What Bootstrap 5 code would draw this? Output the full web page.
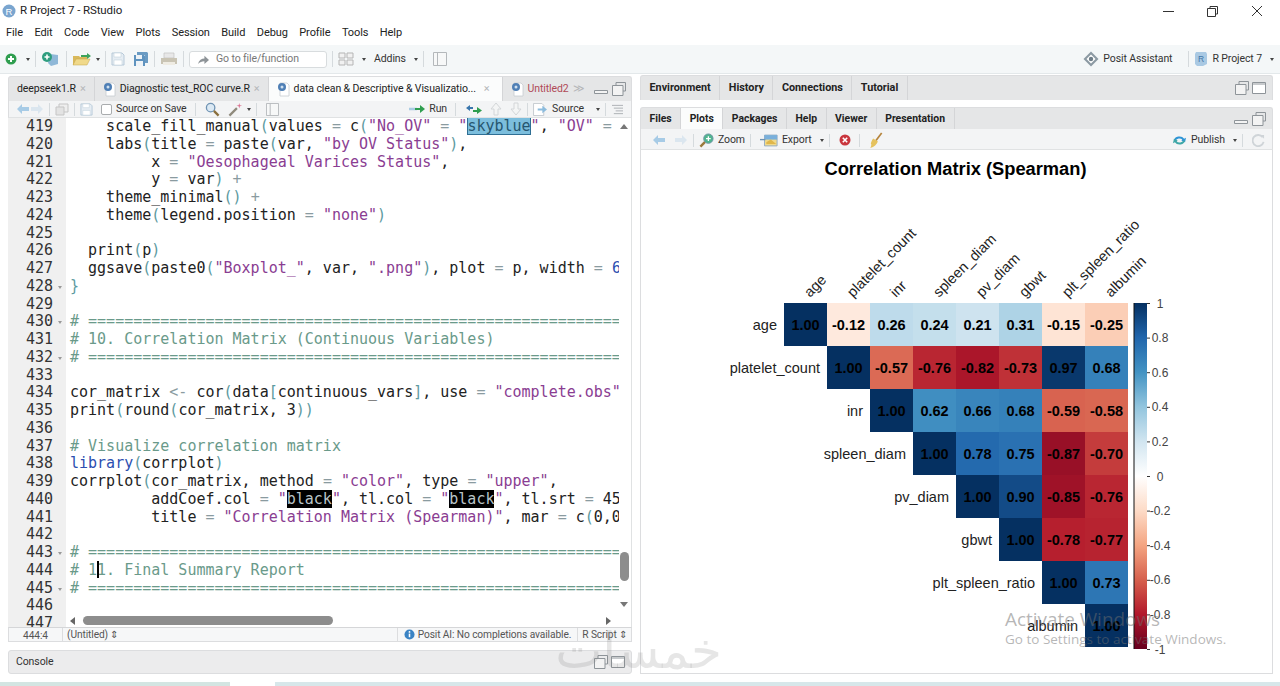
<!DOCTYPE html>
<html lang="en">
<head>
  <meta charset="UTF-8" />
  <title>R Project 7 - RStudio</title>
  <link href="https://cdn.jsdelivr.net/npm/bootstrap@5.3.2/dist/css/bootstrap.min.css" rel="stylesheet" />
  <style>
    html, body { height: 686px; overflow: hidden; }
    body { background: #fff; color: #333; font-family: Roboto, "Liberation Sans", sans-serif; font-size: 10.5px; letter-spacing: -.1px; position: relative; }
    svg { display: block; flex: none; }

    .rs-title { height: 22px; padding-left: 2px; font-size: 11.5px; color: #222; }
    .rs-winbtns { gap: 33px; padding-right: 17px; }
    .rs-menu { height: 23px; padding-left: 6px; gap: 11.5px; font-size: 11px; color: #222; }
    .rs-topbar { height: 29px; padding: 0 6px 0 4px; background: #f4f7f8; border-bottom: 1px solid #e3e8ea; color: #333; }
    .rs-sep { width: 1px; height: 16px; background: #d5dadd; margin: 0 5px; flex: none; }
    .rs-goto { width: 138px; height: 17px; background: #fff; border: 1px solid #d8dcde; border-radius: 3px; color: #777; gap: 6px; padding-left: 7px; }
    .rs-caret { width: 0; height: 0; border-left: 2.5px solid transparent; border-right: 2.5px solid transparent; border-top: 3px solid #444; flex: none; }

    .rs-main { height: 606px; padding: 2px 7px 0 8px; gap: 8px; }
    .rs-left { width: 624px; }
    .rs-right { width: 633px; }
    .rs-strip { background: #e5e6e7; border: 1px solid #dcdddf; border-bottom: 0; border-radius: 3px 3px 0 0; flex: none; }
    .rs-tabs-src { height: 25px; }
    .rs-tabs-right { height: 25px; margin-top: -1px; }
    .rs-tabs-right2 { height: 22px; margin-top: 7px; }
    .rs-tab { height: 100%; padding: 0 8px; color: #222; border-right: 1px solid #d4d5d7; gap: 4px; white-space: nowrap; }
    .rs-tab.rs-bold { font-weight: 700; font-size: 10.8px; padding: 0 8.5px; letter-spacing: 0; }
    .rs-tabs-right2 .rs-tab.rs-bold { font-size: 10.4px; }
    .rs-tab.rs-on { background: #fbfcfc; }
    .rs-x { color: #b5b7b9; font-size: 11px; }
    .rs-red { color: #b04a57; }
    .rs-panebtns { gap: 3px; padding-right: 6px; }
    .rs-bar { height: 17px; background: #f3f4f5; border-bottom: 1px solid #e0e2e3; border-left: 1px solid #dcdddf; border-right: 1px solid #dcdddf; flex: none; color: #333; padding: 0 7px; }
    .rs-bar2 { height: 21px; padding-top: 2px; }
    .rs-bar .rs-sep { height: 13px; }
    .rs-check { width: 11px; height: 11px; background: #fff; border: 1px solid #a9acae; border-radius: 2px; flex: none; }

    .rs-editor { height: 509px; background: #fff; border-right: 1px solid #e0e2e3; overflow: hidden; position: relative; letter-spacing: 0; }
    .rs-gutter { width: 58px; background: #f0f0f0; flex: none; }
    .rs-gnum { height: 17.75px; line-height: 17.75px; padding-right: 13px; text-align: right; position: relative; color: #333; }
    .rs-fold { position: absolute; right: 4px; top: 8px; width: 0; height: 0; border-left: 2px solid transparent; border-right: 2px solid transparent; border-top: 3px solid #999; }
    .rs-code { width: 553px; padding-left: 4px; overflow: hidden; flex: none; }
    .rs-gutter, .rs-code { font-family: "DejaVu Sans Mono", "Liberation Mono", monospace; font-size: 15px; }
    .rs-ln { height: 17.75px; line-height: 17.75px; white-space: pre; color: #222; }
    .rs-s { color: #8a3d92; }
    .rs-c { color: #6a9a8a; }
    .rs-o { color: #8a9ba0; }
    .rs-p { color: #5d9aa0; }
    .rs-k { color: #2c4fb0; }
    .rs-sky { background: #7cbedd; outline: 1px solid #2f6f94; outline-offset: -1px; color: #26566f; }
    .rs-blk { background: #000; color: #b9c4c8; }
    .rs-cursor { display: inline-block; width: 0; position: relative; }
    .rs-cursor::after { content: ""; position: absolute; left: 0; top: -14px; width: 2px; height: 17px; background: #000; }

    .rs-vthumb { position: absolute; left: 612px; top: 434px; width: 9px; height: 29px; background: #8d8d8d; border-radius: 5px; }
    .rs-hthumb { position: absolute; left: 75px; top: 498px; width: 250px; height: 9px; background: #8d8d8d; border-radius: 5px; }
    .rs-arrow { position: absolute; width: 0; height: 0; border-style: solid; border-color: transparent; }
    .rs-up { left: 612px; top: 6px; border-width: 0 4px 5px; border-bottom-color: #777; }
    .rs-down { left: 612px; top: 484px; border-width: 5px 4px 0; border-top-color: #777; }
    .rs-lf { left: 62px; top: 499px; border-width: 4px 5px 4px 0; border-right-color: #666; }
    .rs-rt { left: 598px; top: 499px; border-width: 4px 0 4px 5px; border-left-color: #666; }

    .rs-status { height: 15px; border: 1px solid #dcdddf; border-top-color: #d5d6d8; background: #f6f7f8; color: #555; font-size: 10.2px; flex: none; }
    .rs-pos { width: 54px; text-align: center; border-right: 1px solid #dcdddf; height: 100%; }
    .rs-ai { height: 100%; border-left: 1px solid #dcdddf; border-right: 1px solid #dcdddf; padding: 0 6px; gap: 3px; }
    .rs-console { height: 24px; margin-top: 8px; background: #ececed; border: 1px solid #dcdddf; border-radius: 3px; padding-left: 7px; color: #333; flex: none; }
    .rs-plot { height: 524px; background: #fff; border: 1px solid #dcdddf; border-top: 0; }
    .rs-plot text { font-family: "Liberation Sans", Arial, sans-serif; letter-spacing: 0; }

    .rs-taskbar { height: 4px; margin-top: 2px; gap: 45px; }
    .rs-taskbar div:first-child { width: 230px; background: #d3e5e2; }
    .rs-taskbar div:last-child { background: #d7e7ea; }

    .rs-activate { position: absolute; left: 1005px; top: 610px; color: rgba(110, 110, 110, .5); font-family: "Open Sans", sans-serif; line-height: 1; letter-spacing: 0; }
    .rs-activate div:first-child { font-size: 18.9px; margin-bottom: 4px; }
    .rs-activate div:last-child { font-size: 13.5px; }
    .rs-wmark { position: absolute; left: 562px; top: 626px; width: 160px; text-align: center; font-family: "DejaVu Sans", sans-serif; font-size: 50px; line-height: 1; color: rgba(130, 130, 130, .2); pointer-events: none; }
  </style>
</head>
<body>
  <svg width="0" height="0" class="position-absolute">
    <symbol id="i-new" viewBox="0 0 14 14"><circle cx="7" cy="7" r="5.5" fill="#2f9e4f"/><path d="M7 4v6M4 7h6" stroke="#fff" stroke-width="2"/></symbol>
    <symbol id="i-proj" viewBox="0 0 20 16"><path d="M9 3l8 1v9l-7 2-3-3z" fill="#8fb8d8"/><circle cx="6" cy="6" r="5" fill="#2f9e7f"/><path d="M6 3.5v5M3.500 6h5" stroke="#fff" stroke-width="1.600"/></symbol>
    <symbol id="i-open" viewBox="0 0 20 14"><path d="M1 4h6l1 1h7v8H1z" fill="#d9b95c"/><path d="M1 13l3-6h14l-3 6z" fill="#f0d98a" stroke="#c7a548" stroke-width=".5"/><path d="M9 3h6V1l4 3-4 3V5H9z" fill="#3da35d"/></symbol>
    <symbol id="i-save" viewBox="0 0 14 14"><path d="M1 1h10l2 2v10H1z" fill="#e6edf3" stroke="#b7c9d8"/><path d="M3 1h7v4H3zM3 8h8v5H3z" fill="#fff" stroke="#c5d3de" stroke-width=".6"/></symbol>
    <symbol id="i-saveall" viewBox="0 0 16 16"><path d="M4 1h10l1 1v10h-3V4H4z" fill="#6b9bc3"/><path d="M1 4h10l1 1v10H1z" fill="#5f93bf"/><path d="M3 4h6v4H3zM3 10h7v5H3z" fill="#eef3f7"/></symbol>
    <symbol id="i-print" viewBox="0 0 18 14"><path d="M4 1h10v5H4z" fill="#e8e8e8" stroke="#c2c2c2" stroke-width=".7"/><path d="M1 6h16v6H1z" fill="#c9c4b4"/><path d="M3 10h12v3H3z" fill="#efece3"/></symbol>
    <symbol id="i-goto" viewBox="0 0 14 12"><path d="M1 11c1-4 4-6 7-6V2l5 4.500-5 4.500V8c-3 0-5 1-7 3z" fill="#8e9498"/></symbol>
    <symbol id="i-grid" viewBox="0 0 16 14"><path d="M1 1h6v5H1zM9 1h6v5H9zM1 8h6v5H1zM9 8h6v5H9z" fill="#f1f1f1" stroke="#b5b5b5"/></symbol>
    <symbol id="i-pane" viewBox="0 0 14 14"><path d="M.5.5h13v13H.5zM4.500.5v13" fill="#f7f8f8" stroke="#b4b8bb"/></symbol>
    <symbol id="i-posit" viewBox="0 0 16 16"><path d="M8 .5L15.500 8 8 15.500.5 8z" fill="#8c9aa3"/><path d="M8 3.500L12.500 8 8 12.500 3.500 8z" fill="#fff"/><circle cx="8" cy="8" r="2.200" fill="#6f7e88"/></symbol>
    <symbol id="i-r" viewBox="0 0 14 14"><circle cx="7" cy="7" r="6.500" fill="#7aa5cf"/><text x="7" y="10.500" font-size="9.500" text-anchor="middle" fill="#fff" font-family="Liberation Sans">R</text></symbol>
    <symbol id="i-rproj" viewBox="0 0 14 16"><path d="M2 1h10l1 2v10l-4 2H3l-2-2V3z" fill="#a9c9e3"/><text x="7" y="11" font-size="8.500" text-anchor="middle" fill="#3f76a8" font-family="Liberation Sans">R</text></symbol>
    <symbol id="i-doc" viewBox="0 0 13 15"><path d="M3 1h7l2 2v11H3z" fill="#fff" stroke="#c6ccd1" stroke-width=".8"/><circle cx="5" cy="5" r="4" fill="#4f7fb5"/><circle cx="5" cy="5" r="1.500" fill="#cfe0ef"/></symbol>
    <symbol id="i-min" viewBox="0 0 16 12"><path d="M1.500 7.500h13v3h-13z" fill="#f3f3f3" stroke="#8e9499"/></symbol>
    <symbol id="i-rest" viewBox="0 0 14 14"><path d="M4 3.500V.5h9.500v8.500H11" fill="none" stroke="#8e9499"/><path d="M.5 3.500h10.500v10H.5z" fill="#f3f3f3" stroke="#8e9499"/></symbol>
    <symbol id="i-max" viewBox="0 0 14 12"><path d="M.5.5h13v11H.5z" fill="#fff" stroke="#8e9499"/><path d="M.5 2h13" stroke="#8e9499"/></symbol>
    <symbol id="i-back" viewBox="0 0 14 12"><path d="M1 6l5-5v3h7v4H6v3z" fill="#a7cbe6"/></symbol>
    <symbol id="i-fwd" viewBox="0 0 14 12"><path d="M13 6L8 1v3H1v4h7v3z" fill="#dbe6ef"/></symbol>
    <symbol id="i-show" viewBox="0 0 14 13"><path d="M4 1h9v8H4z" fill="#eee" stroke="#c5c5c5"/><path d="M1 4h8v8H1z" fill="#e3e3e3" stroke="#c5c5c5"/></symbol>
    <symbol id="i-find" viewBox="0 0 16 16"><circle cx="6" cy="6" r="4.500" fill="#dbe9f4" stroke="#6f93b3" stroke-width="1.400"/><path d="M9.500 9.500l5 5" stroke="#8a6f3c" stroke-width="2.400"/></symbol>
    <symbol id="i-wand" viewBox="0 0 16 16"><path d="M1.500 14.500l8-8" stroke="#8f8a7c" stroke-width="2.400"/><path d="M12 1l.6 2.400L15 4l-2.400.6L12 7l-.6-2.400L9 4l2.400-.6z" fill="#d96a8a"/></symbol>
    <symbol id="i-run" viewBox="0 0 16 10"><path d="M0 5h8" stroke="#a8cbe3" stroke-width="2.500"/><path d="M6 4h5V1l5 4-5 4V6H6z" fill="#2f9e4f"/></symbol>
    <symbol id="i-rerun" viewBox="0 0 17 11"><path d="M1 4l4-3v2h3v2H5v2z" fill="#3a76ad"/><path d="M8 6h4V3l5 3.500L12 10V8H8z" fill="#2f9e4f"/></symbol>
    <symbol id="i-upa" viewBox="0 0 12 14"><path d="M6 1l5 6H8v6H4V7H1z" fill="#f4f5f5" stroke="#d3d6d8"/></symbol>
    <symbol id="i-dna" viewBox="0 0 12 14"><path d="M6 13l5-6H8V1H4v6H1z" fill="#f4f5f5" stroke="#d3d6d8"/></symbol>
    <symbol id="i-src" viewBox="0 0 16 14"><path d="M.5.5h9l2 2v11H.5z" fill="#fff" stroke="#c2c8cd"/><path d="M5 6h5V3l5 4-5 4V8H5z" fill="#8cbcdd"/></symbol>
    <symbol id="i-outl" viewBox="0 0 14 12"><path d="M1 1.500h12M3 4.500h10M5 7.500h8M3 10.500h10" stroke="#a8adb1"/></symbol>
    <symbol id="i-zoom" viewBox="0 0 16 16"><path d="M1.500 14.500l5-5" stroke="#9a7a3c" stroke-width="2.600"/><circle cx="10" cy="6" r="5" fill="#4fb58f" stroke="#6f93a3"/><path d="M10 3.500v5M7.500 6h5" stroke="#fff" stroke-width="1.400"/></symbol>
    <symbol id="i-export" viewBox="0 0 20 14"><path d="M5 1h14v12H5z" fill="#f0d98a" stroke="#8fa8c4"/><path d="M5 1h14v5H5z" fill="#7ab0dc"/><path d="M7 9l5-3 6 5H7z" fill="#e0b74a"/><path d="M0 6h6" stroke="#6f93b3" stroke-width="1.500"/></symbol>
    <symbol id="i-del" viewBox="0 0 12 12"><circle cx="6" cy="6" r="5.500" fill="#c9363e"/><path d="M3.800 3.800l4.400 4.400M8.200 3.800l-4.400 4.400" stroke="#fff" stroke-width="1.600"/></symbol>
    <symbol id="i-broom" viewBox="0 0 14 18"><path d="M13 1L7 9" stroke="#b5843c" stroke-width="1.800"/><path d="M4 7l5 3c-1 3-4 6-8 7 1-2 1-3 1-4-1 0 0-3 2-6z" fill="#e5c25e"/></symbol>
    <symbol id="i-publish" viewBox="0 0 16 14"><path d="M2 7a6 5 0 0 1 11-2l2-1-1 5-4-2 1-1a4 3 0 0 0-7 1z" fill="#2e94d6"/><path d="M14 7a6 5 0 0 1-11 2l-2 1 1-5 4 2-1 1a4 3 0 0 0 7-1z" fill="#3fa7a8"/></symbol>
    <symbol id="i-refresh" viewBox="0 0 14 14"><path d="M11.500 3.500a6 6 0 1 0 1 5" fill="none" stroke="#cfd4d8" stroke-width="2"/><path d="M9 1h4v4z" fill="#cfd4d8"/></symbol>
    <symbol id="i-info" viewBox="0 0 12 12"><circle cx="6" cy="6" r="5.500" fill="#3a83c4"/><path d="M6 5v4" stroke="#fff" stroke-width="1.700"/><circle cx="6" cy="3.200" r="1" fill="#fff"/></symbol>
  </svg>

  <!-- window title -->
  <div class="rs-title d-flex align-items-center justify-content-between">
    <div class="d-flex align-items-center gap-1">
      <svg width="14" height="14"><use href="#i-r"/></svg>
      <span>R Project 7 - RStudio</span>
    </div>
    <div class="rs-winbtns d-flex align-items-center">
      <svg width="11" height="11" viewBox="0 0 11 11"><path d="M0 5.500h11" stroke="#333"/></svg>
      <svg width="11" height="11" viewBox="0 0 11 11"><path d="M3 2.500V.5h7.500v7.500H8.500" fill="none" stroke="#333"/><path d="M.5 2.500h8v8h-8z" fill="none" stroke="#333"/></svg>
      <svg width="12" height="12" viewBox="0 0 12 12"><path d="M1 1l10 10M11 1L1 11" stroke="#333"/></svg>
    </div>
  </div>

  <!-- menu -->
  <div class="rs-menu d-flex align-items-center">
    <span>File</span><span>Edit</span><span>Code</span><span>View</span><span>Plots</span><span>Session</span><span>Build</span><span>Debug</span><span>Profile</span><span>Tools</span><span>Help</span>
  </div>

  <!-- global toolbar -->
  <div class="rs-topbar d-flex align-items-center">
    <svg width="14" height="14"><use href="#i-new"/></svg>
    <span class="rs-caret ms-2"></span>
    <span class="rs-sep"></span>
    <svg width="20" height="16"><use href="#i-proj"/></svg>
    <span class="rs-sep"></span>
    <svg width="20" height="14"><use href="#i-open"/></svg>
    <span class="rs-caret ms-1"></span>
    <span class="rs-sep"></span>
    <svg width="14" height="14"><use href="#i-save"/></svg>
    <svg width="16" height="16" class="ms-2"><use href="#i-saveall"/></svg>
    <span class="rs-sep"></span>
    <svg width="18" height="14"><use href="#i-print"/></svg>
    <span class="rs-sep"></span>
    <div class="rs-goto d-flex align-items-center">
      <svg width="13" height="11"><use href="#i-goto"/></svg><span>Go to file/function</span>
    </div>
    <span class="rs-sep"></span>
    <svg width="16" height="14"><use href="#i-grid"/></svg>
    <span class="rs-caret ms-2"></span>
    <span class="ms-2">Addins</span>
    <span class="rs-caret ms-2"></span>
    <span class="rs-sep"></span>
    <svg width="14" height="14" class="ms-1"><use href="#i-pane"/></svg>
    <div class="ms-auto d-flex align-items-center">
      <svg width="16" height="16" class="me-1"><use href="#i-posit"/></svg>
      <span>Posit Assistant</span>
      <span class="rs-sep ms-3"></span>
      <svg width="14" height="16" class="me-1"><use href="#i-rproj"/></svg>
      <span>R Project 7</span>
      <span class="rs-caret ms-2"></span>
    </div>
  </div>

  <div class="rs-main d-flex">
    <!-- source pane -->
    <div class="rs-left d-flex flex-column">
      <div class="rs-strip rs-tabs-src d-flex align-items-center">
        <div class="rs-tab d-flex align-items-center"><span>deepseek1.R</span><span class="rs-x">×</span></div>
        <div class="rs-tab d-flex align-items-center"><svg width="13" height="15"><use href="#i-doc"/></svg><span>Diagnostic test_ROC curve.R</span><span class="rs-x">×</span></div>
        <div class="rs-tab rs-on d-flex align-items-center"><svg width="13" height="15"><use href="#i-doc"/></svg><span>data clean &amp; Descriptive &amp; Visualizatio...</span><span class="rs-x ms-1 me-1">×</span></div>
        <div class="rs-tab border-0 d-flex align-items-center"><svg width="13" height="15"><use href="#i-doc"/></svg><span class="rs-red">Untitled2</span><span class="rs-x">≫</span></div>
        <div class="ms-auto rs-panebtns d-flex align-items-center">
          <svg width="16" height="12"><use href="#i-min"/></svg>
          <svg width="14" height="14"><use href="#i-rest"/></svg>
        </div>
      </div>
      <div class="rs-bar d-flex align-items-center">
        <svg width="14" height="12"><use href="#i-back"/></svg>
        <svg width="14" height="12"><use href="#i-fwd"/></svg>
        <span class="rs-sep"></span>
        <svg width="14" height="13"><use href="#i-show"/></svg>
        <span class="rs-sep"></span>
        <svg width="13" height="13"><use href="#i-save"/></svg>
        <span class="rs-check ms-2 me-1"></span>
        <span>Source on Save</span>
        <span class="rs-sep ms-2"></span>
        <svg width="15" height="15" class="ms-1"><use href="#i-find"/></svg>
        <svg width="15" height="15" class="ms-2"><use href="#i-wand"/></svg>
        <span class="rs-caret ms-1"></span>
        <span class="rs-sep"></span>
        <svg width="13" height="13" class="ms-1"><use href="#i-pane"/></svg>
        <div class="ms-auto d-flex align-items-center">
          <svg width="16" height="10" class="me-1"><use href="#i-run"/></svg>
          <span>Run</span>
          <span class="rs-sep ms-2"></span>
          <svg width="17" height="11" class="ms-1"><use href="#i-rerun"/></svg>
          <svg width="12" height="14" class="ms-2"><use href="#i-upa"/></svg>
          <svg width="12" height="14" class="ms-2"><use href="#i-dna"/></svg>
          <span class="rs-sep"></span>
          <svg width="15" height="13" class="me-1"><use href="#i-src"/></svg>
          <span class="me-1">Source</span>
          <span class="rs-caret ms-2"></span>
          <span class="rs-sep"></span>
          <svg width="13" height="11"><use href="#i-outl"/></svg>
        </div>
      </div>

      <div class="rs-editor d-flex">
        <div class="rs-gutter">
          <div class="rs-gnum">419</div><div class="rs-gnum">420</div><div class="rs-gnum">421</div><div class="rs-gnum">422</div>
          <div class="rs-gnum">423</div><div class="rs-gnum">424</div><div class="rs-gnum">425</div><div class="rs-gnum">426</div>
          <div class="rs-gnum">427</div><div class="rs-gnum">428<i class="rs-fold"></i></div><div class="rs-gnum">429</div><div class="rs-gnum">430<i class="rs-fold"></i></div>
          <div class="rs-gnum">431</div><div class="rs-gnum">432<i class="rs-fold"></i></div><div class="rs-gnum">433</div><div class="rs-gnum">434</div>
          <div class="rs-gnum">435</div><div class="rs-gnum">436</div><div class="rs-gnum">437</div><div class="rs-gnum">438</div>
          <div class="rs-gnum">439</div><div class="rs-gnum">440</div><div class="rs-gnum">441</div><div class="rs-gnum">442</div>
          <div class="rs-gnum">443<i class="rs-fold"></i></div><div class="rs-gnum">444</div><div class="rs-gnum">445<i class="rs-fold"></i></div><div class="rs-gnum">446</div><div class="rs-gnum">447</div>
        </div>
        <div class="rs-code">
<div class="rs-ln">    scale_fill_manual<span class="rs-p">(</span>values <span class="rs-o">=</span> c<span class="rs-p">(</span><span class="rs-s">"No_OV"</span> <span class="rs-o">=</span> <span class="rs-s">"</span><span class="rs-sky">skyblue</span><span class="rs-s">"</span>, <span class="rs-s">"OV"</span> <span class="rs-o">=</span></div>
<div class="rs-ln">    labs<span class="rs-p">(</span>title <span class="rs-o">=</span> paste<span class="rs-p">(</span>var, <span class="rs-s">"by OV Status"</span><span class="rs-p">)</span>,</div>
<div class="rs-ln">         x <span class="rs-o">=</span> <span class="rs-s">"Oesophageal Varices Status"</span>,</div>
<div class="rs-ln">         y <span class="rs-o">=</span> var<span class="rs-p">)</span> <span class="rs-o">+</span></div>
<div class="rs-ln">    theme_minimal<span class="rs-p">()</span> <span class="rs-o">+</span></div>
<div class="rs-ln">    theme<span class="rs-p">(</span>legend.position <span class="rs-o">=</span> <span class="rs-s">"none"</span><span class="rs-p">)</span></div>
<div class="rs-ln"> </div>
<div class="rs-ln">  print<span class="rs-p">(</span>p<span class="rs-p">)</span></div>
<div class="rs-ln">  ggsave<span class="rs-p">(</span>paste0<span class="rs-p">(</span><span class="rs-s">"Boxplot_"</span>, var, <span class="rs-s">".png"</span><span class="rs-p">)</span>, plot <span class="rs-o">=</span> p, width <span class="rs-o">=</span> <span class="rs-k">6</span>, height <span class="rs-o">=</span> 4<span class="rs-p">)</span></div>
<div class="rs-ln"><span class="rs-p">}</span></div>
<div class="rs-ln"> </div>
<div class="rs-ln rs-c"># ============================================================================</div>
<div class="rs-ln rs-c"># 10. Correlation Matrix (Continuous Variables)</div>
<div class="rs-ln rs-c"># ============================================================================</div>
<div class="rs-ln"> </div>
<div class="rs-ln">cor_matrix <span class="rs-o">&lt;-</span> cor<span class="rs-p">(</span>data<span class="rs-p">[</span>continuous_vars<span class="rs-p">]</span>, use <span class="rs-o">=</span> <span class="rs-s">"complete.obs"</span><span class="rs-p">)</span></div>
<div class="rs-ln">print<span class="rs-p">(</span>round<span class="rs-p">(</span>cor_matrix, 3<span class="rs-p">))</span></div>
<div class="rs-ln"> </div>
<div class="rs-ln rs-c"># Visualize correlation matrix</div>
<div class="rs-ln"><span class="rs-k">library</span><span class="rs-p">(</span>corrplot<span class="rs-p">)</span></div>
<div class="rs-ln">corrplot<span class="rs-p">(</span>cor_matrix, method <span class="rs-o">=</span> <span class="rs-s">"color"</span>, type <span class="rs-o">=</span> <span class="rs-s">"upper"</span>,</div>
<div class="rs-ln">         addCoef.col <span class="rs-o">=</span> <span class="rs-s">"</span><span class="rs-blk">black</span><span class="rs-s">"</span>, tl.col <span class="rs-o">=</span> <span class="rs-s">"</span><span class="rs-blk">black</span><span class="rs-s">"</span>, tl.srt <span class="rs-o">=</span> 45,</div>
<div class="rs-ln">         title <span class="rs-o">=</span> <span class="rs-s">"Correlation Matrix (Spearman)"</span>, mar <span class="rs-o">=</span> c<span class="rs-p">(</span>0,0,1,0<span class="rs-p">))</span></div>
<div class="rs-ln"> </div>
<div class="rs-ln rs-c"># ============================================================================</div>
<div class="rs-ln rs-c"># 1<span class="rs-cursor"></span>1. Final Summary Report</div>
<div class="rs-ln rs-c"># ============================================================================</div>
<div class="rs-ln"> </div>
<div class="rs-ln"> </div>
        </div>
        <span class="rs-arrow rs-up"></span>
        <span class="rs-vthumb"></span>
        <span class="rs-arrow rs-down"></span>
        <span class="rs-arrow rs-lf"></span>
        <span class="rs-hthumb"></span>
        <span class="rs-arrow rs-rt"></span>
      </div>

      <div class="rs-status d-flex align-items-center">
        <div class="rs-pos">444:4</div>
        <div class="ps-1">(Untitled) ⇕</div>
        <div class="ms-auto rs-ai d-flex align-items-center">
          <svg width="11" height="11"><use href="#i-info"/></svg><span>Posit AI: No completions available.</span>
        </div>
        <div class="px-1 text-nowrap">R Script ⇕</div>
      </div>
      <div class="rs-console d-flex align-items-center">
        <span>Console</span>
        <div class="ms-auto rs-panebtns d-flex align-items-center">
          <svg width="14" height="14"><use href="#i-rest"/></svg>
          <svg width="14" height="12"><use href="#i-max"/></svg>
        </div>
      </div>
    </div>

    <!-- right panes -->
    <div class="rs-right d-flex flex-column">
      <div class="rs-strip rs-tabs-right d-flex align-items-center">
        <div class="rs-tab rs-bold d-flex align-items-center">Environment</div>
        <div class="rs-tab rs-bold d-flex align-items-center">History</div>
        <div class="rs-tab rs-bold d-flex align-items-center">Connections</div>
        <div class="rs-tab rs-bold d-flex align-items-center">Tutorial</div>
        <div class="ms-auto rs-panebtns d-flex align-items-center">
          <svg width="14" height="14"><use href="#i-rest"/></svg>
          <svg width="14" height="12"><use href="#i-max"/></svg>
        </div>
      </div>
      <div class="rs-strip rs-tabs-right2 d-flex align-items-center">
        <div class="rs-tab rs-bold d-flex align-items-center">Files</div>
        <div class="rs-tab rs-bold rs-on d-flex align-items-center">Plots</div>
        <div class="rs-tab rs-bold d-flex align-items-center">Packages</div>
        <div class="rs-tab rs-bold d-flex align-items-center">Help</div>
        <div class="rs-tab rs-bold d-flex align-items-center">Viewer</div>
        <div class="rs-tab rs-bold d-flex align-items-center">Presentation</div>
        <div class="ms-auto rs-panebtns d-flex align-items-center">
          <svg width="16" height="12"><use href="#i-min"/></svg>
          <svg width="14" height="14"><use href="#i-rest"/></svg>
        </div>
      </div>
      <div class="rs-bar rs-bar2 d-flex align-items-center">
        <svg width="14" height="12" class="ms-1"><use href="#i-back"/></svg>
        <svg width="14" height="12" class="ms-2"><use href="#i-fwd"/></svg>
        <span class="rs-sep"></span>
        <svg width="15" height="15" class="me-1"><use href="#i-zoom"/></svg>
        <span>Zoom</span>
        <span class="rs-sep"></span>
        <svg width="18" height="13" class="ms-1 me-1"><use href="#i-export"/></svg>
        <span>Export</span>
        <span class="rs-caret ms-2"></span>
        <span class="rs-sep"></span>
        <svg width="12" height="12" class="ms-1"><use href="#i-del"/></svg>
        <span class="rs-sep ms-2"></span>
        <svg width="14" height="17" class="ms-1"><use href="#i-broom"/></svg>
        <div class="ms-auto d-flex align-items-center">
          <svg width="15" height="13" class="me-1"><use href="#i-publish"/></svg>
          <span>Publish</span>
          <span class="rs-caret ms-2"></span>
          <span class="rs-sep"></span>
          <svg width="13" height="13" class="ms-1"><use href="#i-refresh"/></svg>
        </div>
      </div>
      <div class="rs-plot">
        <svg id="plot" width="631" height="524" viewBox="641 150 631 524"></svg>
      </div>
    </div>
  </div>

  <div class="rs-taskbar d-flex"><div></div><div class="flex-grow-1"></div></div>

  <div class="rs-wmark" dir="rtl">خمسات</div>
  <div class="rs-activate">
    <div>Activate Windows</div>
    <div>Go to Settings to activate Windows.</div>
  </div>

<script>
  // corrplot's RdBu ramp, from -1 to 1
  const ramp = ["#67001F","#B2182B","#D6604D","#F4A582","#FDDBC7","#FFFFFF","#D1E5F0","#92C5DE","#4393C3","#2166AC","#053061"];
  const names = ["age","platelet_count","inr","spleen_diam","pv_diam","gbwt","plt_spleen_ratio","albumin"];
  const values = [
    [1,-.12,.26,.24,.21,.31,-.15,-.25],
    [1,-.57,-.76,-.82,-.73,.97,.68],
    [1,.62,.66,.68,-.59,-.58],
    [1,.78,.75,-.87,-.70],
    [1,.90,-.85,-.76],
    [1,-.78,-.77],
    [1,.73],
    [1]
  ];
  const left = 784, top0 = 303, size = 43;

  function hex(c) { return [1,3,5].map(i => parseInt(c.substr(i,2),16)); }
  function color(v) {
    const p = (v + 1) * 5, i = Math.min(Math.floor(p), 9), t = p - i;
    const a = hex(ramp[i]), b = hex(ramp[i+1]);
    return "rgb(" + a.map((x,k) => Math.round(x + (b[k]-x)*t)).join(",") + ")";
  }

  let s = '<text x="955.500" y="175" font-size="18.300" font-weight="700" text-anchor="middle" fill="#000">Correlation Matrix (Spearman)</text>';
  names.forEach((n,r) => {
    const y = top0 + r*size;
    s += '<text x="' + (left + r*size - 7) + '" y="' + (y + 27) + '" font-size="14.500" text-anchor="end" fill="#222">' + n + '</text>';
    const cx = left + r*size + 26;
    s += '<text transform="translate(' + cx + ' 298) rotate(-45)" font-size="14.500" fill="#222">' + n + '</text>';
    values[r].forEach((v,k) => {
      const x = left + (r+k)*size;
      s += '<rect x="' + x + '" y="' + y + '" width="' + size + '" height="' + size + '" fill="' + color(v) + '"/>';
    });
  });
  values.forEach((row,r) => row.forEach((v,k) => {
    const x = left + (r+k)*size + size/2, y = top0 + r*size + 27;
    s += '<text x="' + x + '" y="' + y + '" font-size="14.500" font-weight="700" text-anchor="middle" fill="#000">' + v.toFixed(2) + '</text>';
  }));

  // colour bar
  const stops = ramp.slice().reverse().map((c,i) => '<stop offset="' + i*10 + '%" stop-color="' + c + '"/>').join("");
  s += '<defs><linearGradient id="bar" x1="0" y1="0" x2="0" y2="1">' + stops + '</linearGradient></defs>';
  s += '<rect x="1134" y="303" width="13" height="346" fill="url(#bar)"/><path d="M1134 303v346" stroke="#111"/>';
  ["1","0.8","0.6","0.4","0.2","0","-0.2","-0.4","-0.6","-0.8","-1"].forEach((t,i) => {
    const y = 303.500 + i*34.600;
    s += '<path d="M1147 ' + y + 'h3" stroke="#333"/>';
    s += '<text x="1160" y="' + (y + 4) + '" font-size="12" text-anchor="middle" fill="#444">' + t + '</text>';
  });
  document.getElementById("plot").innerHTML = s;
</script>
<script src="https://cdn.jsdelivr.net/npm/bootstrap@5.3.2/dist/js/bootstrap.bundle.min.js"></script>
</body>
</html>
